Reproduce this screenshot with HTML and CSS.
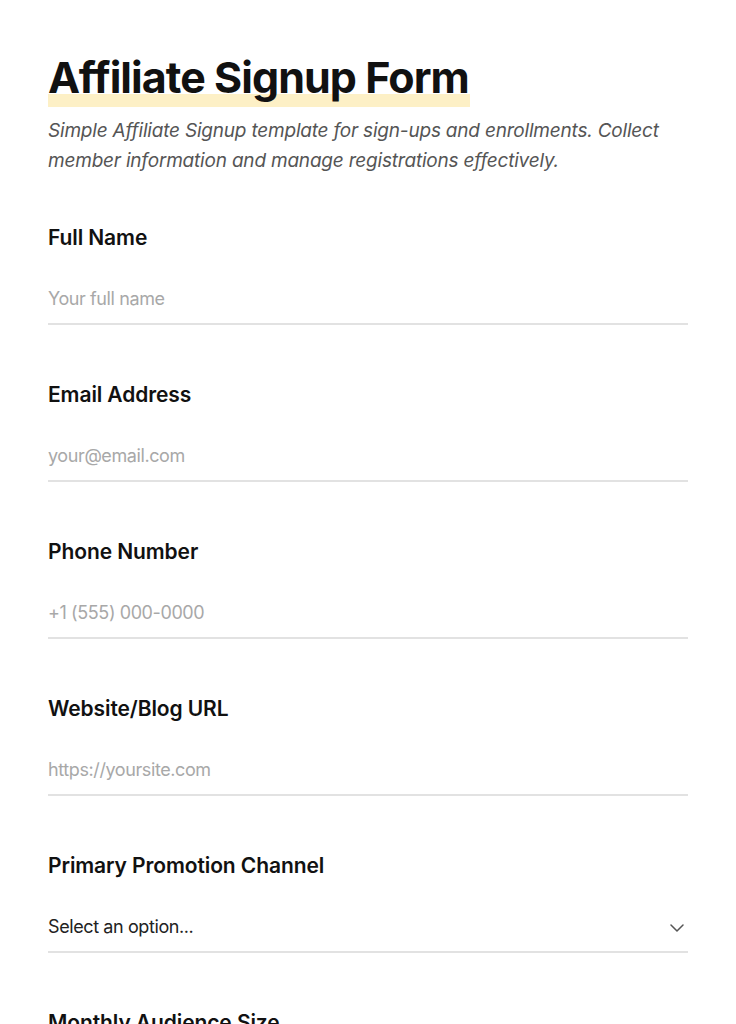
FILE: index.html
```html
<!DOCTYPE html>
<html lang="en">
<head>
    <meta charset="UTF-8">
    <meta name="viewport" content="width=device-width, initial-scale=1.0">
    <title>Affiliate Signup Form</title>
    <link rel="stylesheet" href="styles.css">
</head>
<body>
    <main class="form-page">
        <header class="form-header">
            <h1 class="form-title"><span class="highlight">Affiliate Signup Form</span></h1>
            <p class="form-intro">Simple Affiliate Signup template for sign-ups and enrollments. Collect member information and manage registrations effectively.</p>
        </header>

        <form class="signup-form">
            <div class="field">
                <label class="field-label" for="full-name">Full Name</label>
                <input class="field-input" id="full-name" type="text" placeholder="Your full name">
            </div>
            <div class="field">
                <label class="field-label" for="email">Email Address</label>
                <input class="field-input" id="email" type="email" placeholder="your@email.com">
            </div>
            <div class="field">
                <label class="field-label" for="phone">Phone Number</label>
                <input class="field-input" id="phone" type="tel" placeholder="+1 (555) 000-0000">
            </div>
            <div class="field">
                <label class="field-label" for="website">Website/Blog URL</label>
                <input class="field-input" id="website" type="url" placeholder="https://yoursite.com">
            </div>
            <div class="field">
                <label class="field-label" for="channel">Primary Promotion Channel</label>
                <div class="select-wrap">
                    <select class="field-input field-select" id="channel">
                        <option>Select an option...</option>
                        <option>Blog</option>
                        <option>YouTube</option>
                        <option>Social Media</option>
                        <option>Email Newsletter</option>
                    </select>
                    <svg class="chevron" width="14" height="8" viewBox="0 0 14 8" fill="none">
                        <path d="M1 1l6 6 6-6" stroke="#555" stroke-width="1.5" stroke-linecap="round" stroke-linejoin="round"/>
                    </svg>
                </div>
            </div>
            <div class="field">
                <label class="field-label" for="audience">Monthly Audience Size</label>
                <div class="select-wrap">
                    <select class="field-input field-select" id="audience">
                        <option>Select an option...</option>
                    </select>
                </div>
            </div>
        </form>
    </main>
</body>
</html>
```

FILE: styles.css
```css
body {
    margin: 0;
    background: #fff;
    color: #111;
    font-family: Inter, "Noto Sans", sans-serif;
}
.form-page {
    width: 640px;
    padding: 52px 48px 48px;
}
.form-title {
    margin: 0;
    font-size: 43px;
    font-weight: 700;
    letter-spacing: -0.95px;
    line-height: 50px;
}
/* yellow marker band under the lower half of the title */
.highlight {
    display: inline-block;
    padding: 0 1px 8px 0;
    background: linear-gradient(transparent 42px, #fdf0c6 42px, #fdf0c6 55px, transparent 55px);
}
.form-intro {
    margin: 6px 0 0;
    font-size: 19px;
    font-style: italic;
    line-height: 30px;
    color: #555;
    letter-spacing: -0.2px;
}
.signup-form {
    display: flex;
    flex-direction: column;
    gap: 58px;
    margin-top: 50px;
}
.field {
    display: flex;
    flex-direction: column;
    gap: 37px;
}
.field-label {
    font-size: 21px;
    font-weight: 600;
    letter-spacing: -0.1px;
    line-height: 24px;
}
.field-input {
    border: none;
    border-bottom: 2px solid #e2e2e2;
    padding: 0 0 12px;
    font: inherit;
    font-size: 18px;
    line-height: 24px;
    color: #222;
    background: transparent;
    outline: none;
    letter-spacing: -0.4px;
}
.field-input::placeholder {
    color: #a8a8a8;
}
.select-wrap {
    position: relative;
}
.field-select {
    width: 100%;
    appearance: none;
    -webkit-appearance: none;
}
.chevron {
    position: absolute;
    right: 4px;
    top: 9px;
}
```
